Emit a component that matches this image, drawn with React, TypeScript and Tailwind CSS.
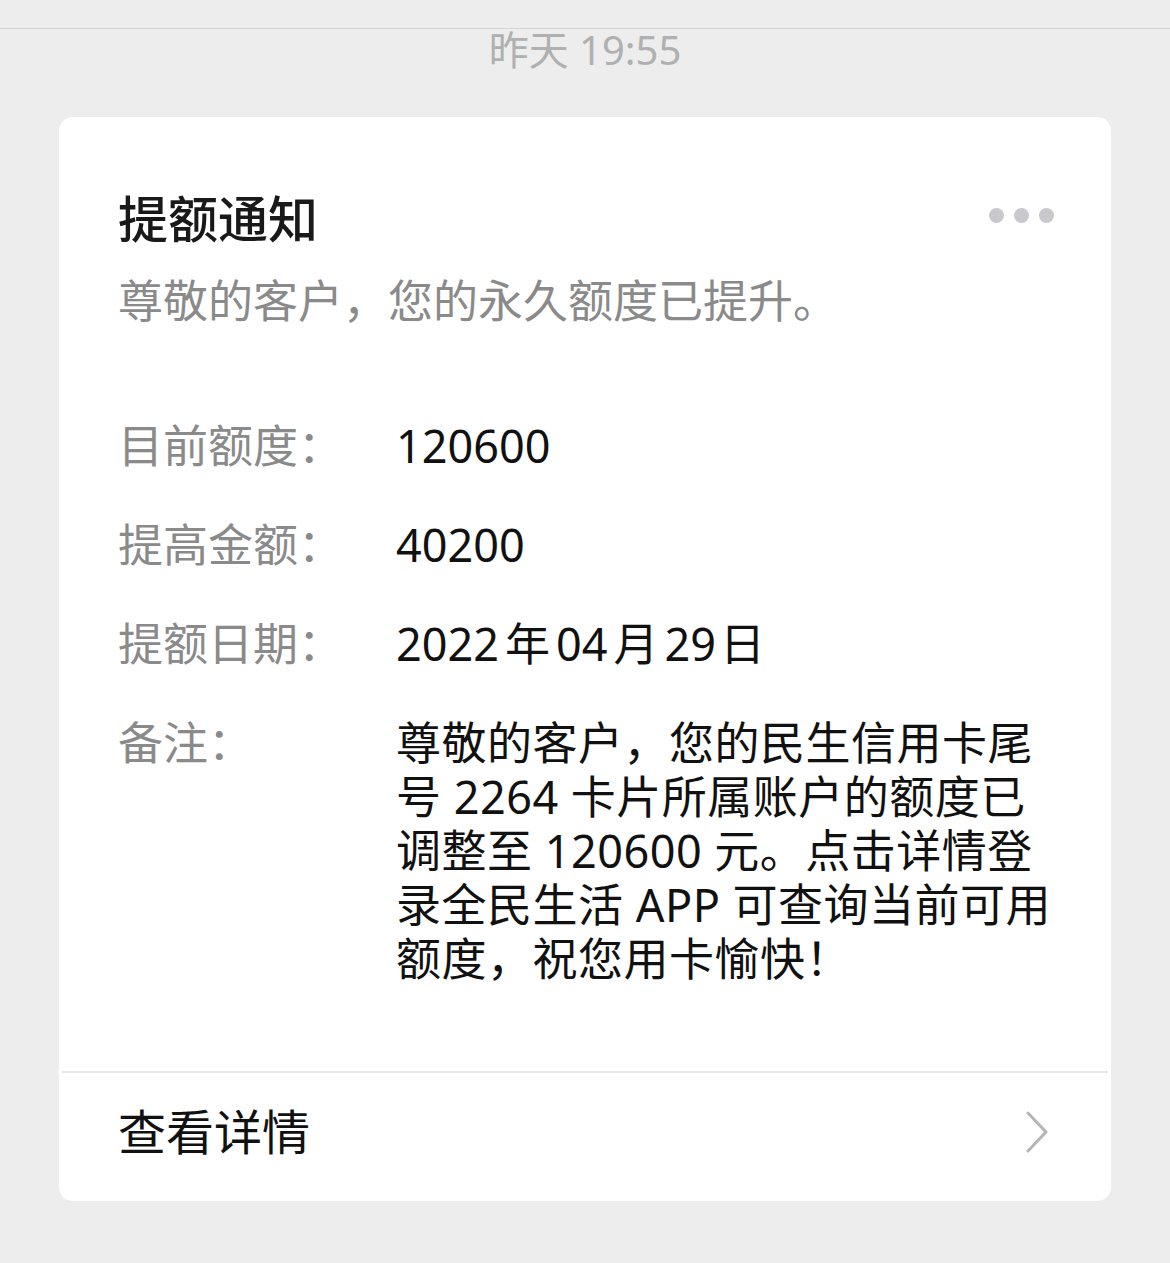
const rows = [
  { label: "目前额度：", value: "120600" },
  { label: "提高金额：", value: "40200" },
];

const remark =
  "尊敬的客户，您的民生信用卡尾号 2264 卡片所属账户的额度已调整至 120600 元。点击详情登录全民生活 APP 可查询当前可用额度，祝您用卡愉快！";

function Row({ label, children }: { label: string; children: React.ReactNode }) {
  return (
    <div className="flex items-start">
      <div className="w-[278px] shrink-0 text-[45px] leading-[54px] text-[#8a8a8a]">{label}</div>
      <div className="flex-1 text-[45px] leading-[54px] text-[#111111]">{children}</div>
    </div>
  );
}

export default function App() {
  return (
    <div
      className="min-h-[1263px] w-full bg-[#ededed]"
      style={{ fontFamily: '"Noto Sans", "Noto Sans CJK SC", sans-serif' }}
    >
      <div className="h-[29px] border-b border-[#d6d6d6]" />
      <div className="flex h-[41px] items-center justify-center text-[40px] leading-[42px] text-[#b0b0b0]">
        昨天 19:55
      </div>

      <div className="mx-[59px] mt-[47px] overflow-hidden rounded-[14px] bg-white">
        <div className="px-[59px] pt-[72px] pb-[85px]">
          <div className="flex items-center justify-between">
            <h1 className="text-[50px] font-medium leading-[60px] text-[#191919]">提额通知</h1>
            <div className="mr-[-2px] mt-[-8px] flex items-center gap-[10px]">
              <span className="h-[15px] w-[15px] rounded-full bg-[#c9c9cd]" />
              <span className="h-[15px] w-[15px] rounded-full bg-[#c9c9cd]" />
              <span className="h-[15px] w-[15px] rounded-full bg-[#c9c9cd]" />
            </div>
          </div>
          <p className="mt-[22px] text-[45px] leading-[60px] text-[#8a8a8a]">
            尊敬的客户，您的永久额度已提升。
          </p>

          <div className="mt-[88px] flex flex-col gap-[45px]">
            {rows.map((r) => (
              <Row key={r.label} label={r.label}>
                {r.value}
              </Row>
            ))}
            <Row label="提额日期：">
              2022<span className="px-[6px]">年</span>04<span className="px-[6px]">月</span>29
              <span className="pl-[4px]">日</span>
            </Row>
            <Row label="备注：">
              <p className="w-[660px] tracking-[0.5px]">{remark}</p>
            </Row>
          </div>
        </div>

        <div className="mx-[3px] border-t-2 border-[#e6e6e6]" />
        <div className="flex h-[128px] items-center justify-between pb-[10px] pl-[59px] pr-[62px]">
          <span className="text-[48px] leading-[56px] text-[#111111]">查看详情</span>
          <svg width="24" height="42" viewBox="0 0 24 42" fill="none">
            <path d="M3 2 L21 21 L3 40" stroke="#b5b5b5" strokeWidth="3" strokeLinecap="round" strokeLinejoin="round" />
          </svg>
        </div>
      </div>
    </div>
  );
}
